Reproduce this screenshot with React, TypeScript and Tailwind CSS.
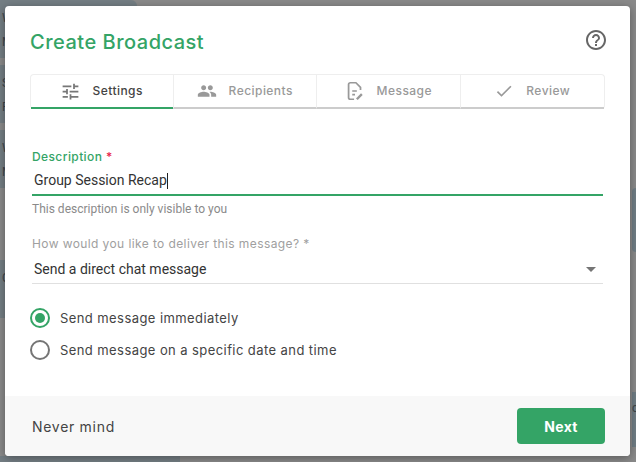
import React from "react";

const mont = "font-['Inter','Liberation_Sans',sans-serif]";

function SlidersIcon() {
  return (
    <svg width="21" height="21" viewBox="0 0 24 24" fill="currentColor" className="-mx-[0.5px]">
      <path d="M3 17v2h6v-2H3zM3 5v2h10V5H3zm10 16v-2h8v-2h-8v-2h-2v6h2zM7 9v2H3v2h4v2h2V9H7zm14 4v-2H11v2h10zm-6-4h2V7h4V5h-4V3h-2v6z" />
    </svg>
  );
}

function PeopleIcon() {
  return (
    <svg width="20" height="20" viewBox="0 0 24 24" fill="currentColor">
      <path d="M16 11c1.66 0 2.99-1.34 2.99-3S17.66 5 16 5c-1.66 0-3 1.34-3 3s1.34 3 3 3zm-8 0c1.66 0 2.99-1.34 2.99-3S9.66 5 8 5C6.34 5 5 6.34 5 8s1.34 3 3 3zm0 2c-2.33 0-7 1.17-7 3.5V19h14v-2.5c0-2.33-4.67-3.5-7-3.5zm8 0c-.29 0-.62.02-.97.05 1.16.84 1.97 1.97 1.97 3.45V19h6v-2.5c0-2.33-4.67-3.5-7-3.5z" />
    </svg>
  );
}

function DocEditIcon() {
  return (
    <svg width="22" height="22" viewBox="0 0 24 24" fill="none" stroke="currentColor" strokeWidth="1.9" className="-mx-[1px]">
      <path d="M11 21H7a2 2 0 0 1-2-2V5a2 2 0 0 1 2-2h6l5 5v3" />
      <path d="M9 12h5M9 16h3" />
      <path d="M14 21l5.5-5.5" strokeWidth="2.6" />
    </svg>
  );
}

function CheckIcon() {
  return (
    <svg width="20" height="20" viewBox="0 0 24 24" fill="currentColor">
      <path d="M9 16.17 4.83 12l-1.42 1.41L9 19 21 7l-1.41-1.41z" />
    </svg>
  );
}

function HelpIcon() {
  return (
    <svg width="24" height="24" viewBox="0 0 24 24" fill="currentColor">
      <path d="M11 18h2v-2h-2v2zm1-16C6.48 2 2 6.48 2 12s4.48 10 10 10 10-4.48 10-10S17.52 2 12 2zm0 18c-4.41 0-8-3.59-8-8s3.59-8 8-8 8 3.59 8 8-3.59 8-8 8zm0-14c-2.21 0-4 1.79-4 4h2c0-1.1.9-2 2-2s2 .9 2 2c0 2-3 1.75-3 5h2c0-2.25 3-2.5 3-5 0-2.21-1.79-4-4-4z" />
    </svg>
  );
}

const tabs = [
  { label: "Settings", icon: <SlidersIcon />, active: true, width: "w-[142px]" },
  { label: "Recipients", icon: <PeopleIcon />, active: false, width: "w-[144px]" },
  { label: "Message", icon: <DocEditIcon />, active: false, width: "w-[144px]" },
  { label: "Review", icon: <CheckIcon />, active: false, width: "w-[145px]" },
];

// page behind the dialog, only its edges show
function Backdrop() {
  const rowText = "w-[5px] overflow-hidden font-['Roboto',sans-serif] text-[12px] leading-[24px] text-[#3f454a] pl-[2px] pt-[6px]";
  return (
    <div className="w-full h-full flex justify-between">
      <div className="w-[180px] flex flex-col">
        <div className="h-[58px] w-[137px] rounded-r-[6px] bg-[#747e84]">
          <div className={rowText}>W<br />M</div>
        </div>
        <div className="mt-[7px] h-[58px] bg-[#747e84]">
          <div className={rowText}>S<br />P</div>
        </div>
        <div className="mt-[7px] h-[58px] bg-[#747e84]">
          <div className={rowText}>W<br />M</div>
        </div>
        <div className="mt-[72px] h-[58px] bg-[#747e84]">
          <div className={rowText}>C</div>
        </div>
        <div className="mt-[138px] h-[6px] bg-[#747e84]" />
      </div>
      <div className="w-[4px] flex flex-col">
        <div className="mt-[188px] h-[64px] rounded-l-[4px] bg-[#707d85]" />
        <div className="mt-[140px] h-[55px] bg-[#707d85] overflow-hidden font-['Roboto',sans-serif] text-[12px] leading-[16px] text-[#3f454a] pt-[8px]">
          c
        </div>
      </div>
    </div>
  );
}

export default function App() {
  return (
    <div className="relative w-[636px] h-[462px] bg-[#8a8a8a] overflow-hidden">
      <Backdrop />

      <div className="absolute left-[5px] top-[6px] w-[625px] h-[450px] bg-white rounded-[4px] flex flex-col shadow-[0_2px_10px_rgba(0,0,0,0.35)]">
        <div className="flex-1 px-[25px]">
          {/* Title */}
          <div className="flex justify-between h-[68px]">
            <h1 className={`${mont} mt-[24px] text-[20px] leading-[24px] font-medium text-[#34a466] tracking-[0.5px]`}>
              Create Broadcast
            </h1>
            <span className="mt-[22px] -mr-[3px] h-[24px] text-[#666]"><HelpIcon /></span>
          </div>

          {/* Tabs */}
          <div className="flex w-[575px] rounded-[4px] border border-b-0 border-[#eeeeee]">
            {tabs.map((t, i) => (
              <div
                key={t.label}
                className={`${t.width} h-[34px] flex items-center justify-center gap-[12px] border-b-2 ${
                  t.active ? "border-b-[#34a466]" : "border-b-[#cccccc]"
                } ${i > 0 ? "border-l border-l-[#eeeeee]" : ""} ${mont} text-[12px] font-medium tracking-[0.45px] ${
                  t.active ? "text-[#444]" : "text-[#999]"
                }`}
              >
                <span className={t.active ? "text-[#777]" : "text-[#999]"}>{t.icon}</span>
                {t.label}
              </div>
            ))}
          </div>

          <div className="ml-[2px] w-[571px]">
            {/* Description */}
            <div className="mt-[40px]">
              <label className={`${mont} block text-[12px] font-medium leading-[16px] tracking-[0.4px] text-[#34a466]`}>
                Description <span className="text-[#e8234a]">*</span>
              </label>
              <div className="h-[31px] pt-[2px] border-b-2 border-[#34a466] flex items-center pl-[2px] font-['Roboto',sans-serif] text-[14px] text-[#333]">
                Group Session Recap<span className="inline-block w-px h-[16px] bg-[#222]" />
              </div>
              <p className="mt-[5px] font-['Roboto',sans-serif] text-[12px] leading-[16px] text-[#8a8a8a]">
                This description is only visible to you
              </p>
            </div>

            {/* Deliver select */}
            <div className="mt-[19px]">
              <label className={`${mont} block text-[12px] leading-[16px] text-[#a0a0a0] tracking-[0.4px]`}>
                How would you like to deliver this message? *
              </label>
              <div className="h-[32px] pt-[3px] border-b border-[#e0e0e0] flex items-center justify-between pl-[2px] pr-[7px] font-['Roboto',sans-serif] text-[14px] text-[#333]">
                Send a direct chat message
                <span className="w-0 h-0 border-x-[5px] border-x-transparent border-t-[5px] border-t-[#757575]" />
              </div>
            </div>
          </div>

          {/* Radios */}
          <div className="mt-[24px] flex flex-col gap-[12px]">
            <div className="flex items-center gap-[10px] h-[20px]">
              <span className="w-[20px] h-[20px] rounded-full border-2 border-[#34a466] flex items-center justify-center">
                <span className="w-[10px] h-[10px] rounded-full bg-[#34a466]" />
              </span>
              <span className={`${mont} pt-[1px] text-[13px] text-[#444] tracking-[0.42px]`}>Send message immediately</span>
            </div>
            <div className="flex items-center gap-[10px] h-[20px]">
              <span className="w-[20px] h-[20px] rounded-full border-2 border-[#757575]" />
              <span className={`${mont} pt-[2px] text-[13px] text-[#444] tracking-[0.42px]`}>Send message on a specific date and time</span>
            </div>
          </div>
        </div>

        {/* Footer */}
        <div className="h-[60px] bg-[#f8f8f8] rounded-b-[4px] flex items-center justify-between pl-[27px] pr-[25px]">
          <span className={`${mont} text-[14px] text-[#444] tracking-[0.7px]`}>Never mind</span>
          <button className={`${mont} w-[88px] h-[36px] rounded-[4px] bg-[#34a466] text-white text-[14px] font-bold tracking-[0.3px]`}>Next</button>
        </div>
      </div>
    </div>
  );
}
